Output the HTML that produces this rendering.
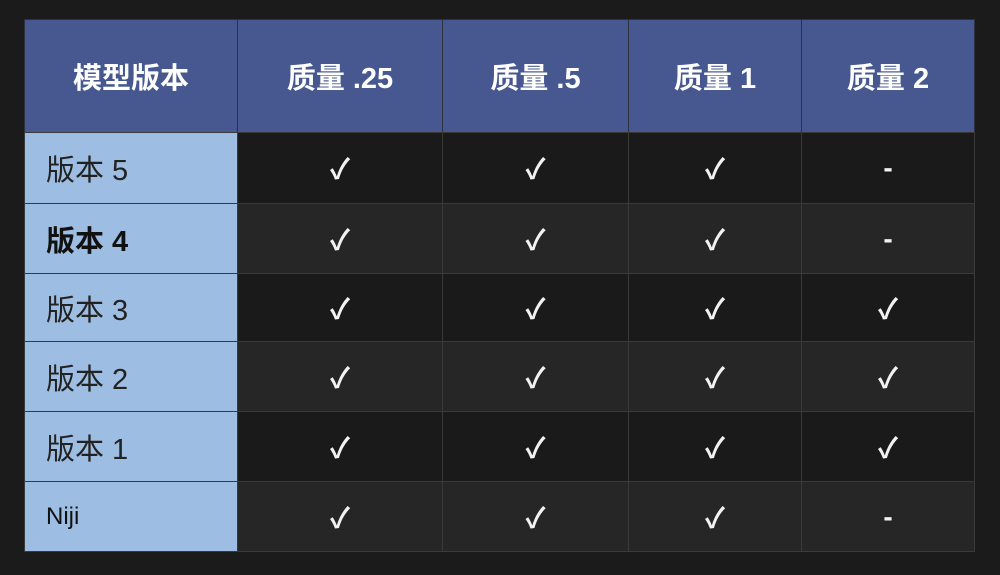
<!DOCTYPE html>
<html><head><meta charset="utf-8"><style>
body{margin:0;width:1000px;height:575px;background:#1b1b1b;overflow:hidden;font-family:"Liberation Sans","Noto Sans CJK SC",sans-serif}
.c{position:absolute;display:flex;align-items:center;justify-content:center;box-sizing:border-box;border:1px solid #3a3a3a;color:#f2f2f2;font-size:28px;font-weight:bold}
.h{background:#46588f;font-weight:bold;font-size:29px;color:#fff;border-color:#2e3140}
.f{background:#9dbde2;color:#222;justify-content:flex-start;padding-left:21px;font-size:29px;font-weight:normal}
.o{background:#1a1a1a}.e{background:#262626}
</style></head><body>
<div id="t"></div>
<script>
var xs=[24,237,442,628,801,974],ys=[19,132,203,273,341,411,481,551];
var H=["模型版本","质量 .25","质量 .5","质量 1","质量 2"];
var R=[["版本 5","✓","✓","✓","-"],["<b style='color:#111'>版本 4</b>","✓","✓","✓","-"],["版本 3","✓","✓","✓","✓"],["版本 2","✓","✓","✓","✓"],["版本 1","✓","✓","✓","✓"],["<span style='font-size:24px;color:#111'>Niji</span>","✓","✓","✓","-"]];
var s="";
for(var r=0;r<7;r++)for(var c=0;c<5;c++){
var cls=r==0?"h":(c==0?"f":(r%2?"o":"e"));
var txt=r==0?H[c]:R[r-1][c];
s+='<div class="c '+cls+'" style="left:'+xs[c]+'px;top:'+ys[r]+'px;width:'+(xs[c+1]-xs[c]+1)+'px;height:'+(ys[r+1]-ys[r]+1)+'px">'+txt+'</div>';}
document.getElementById("t").innerHTML=s;
</script>
</body></html>
